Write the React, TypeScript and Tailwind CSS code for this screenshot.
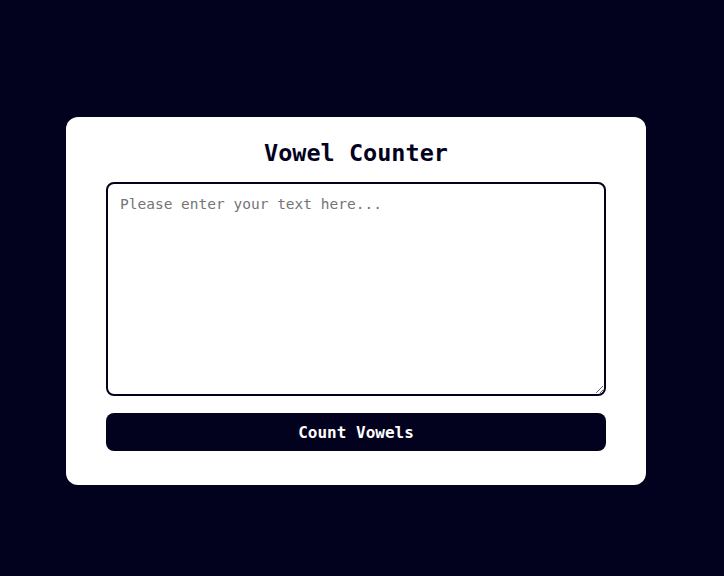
export default function App() {
  return (
    <div className="min-h-[576px] w-full bg-[#03021e] pt-[117px] pl-[66px]" style={{ fontFamily: '"DejaVu Sans Mono", monospace' }}>
      <div className="w-[580px] rounded-xl bg-white px-10 pt-[22px] pb-[34px] flex flex-col">
        <h1 className="text-center text-[23.5px] leading-[28px] font-bold text-[#03021e] mb-[15px]">Vowel Counter</h1>
        <textarea
          className="block h-[214px] w-full rounded-lg border-2 border-[#03021e] px-3 pt-[11px] pb-3 text-[14.5px] leading-[18px] text-[#03021e] placeholder:text-[#757575] outline-none"
          placeholder="Please enter your text here..."
        />
        <button className="mt-[17px] h-[38px] w-full rounded-lg bg-[#03021e] pt-[2px] text-white font-bold text-[16px]">Count Vowels</button>
      </div>
    </div>
  );
}
